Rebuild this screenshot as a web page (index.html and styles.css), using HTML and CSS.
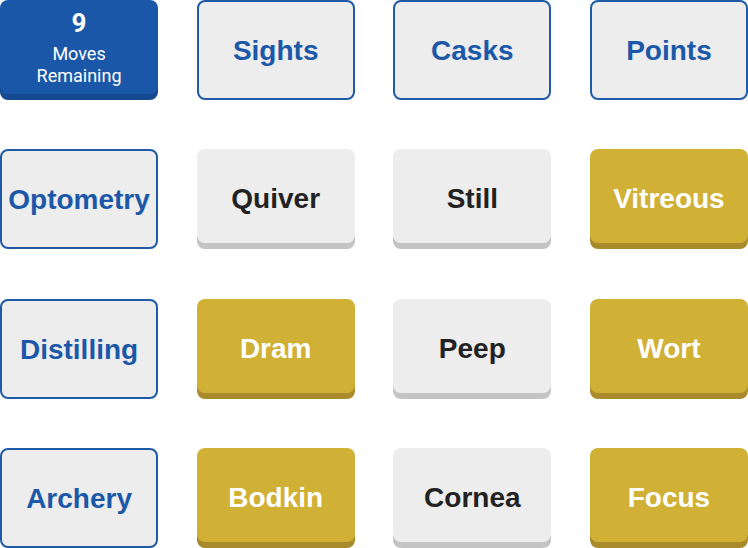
FILE: index.html
```html
<!DOCTYPE html>
<html lang="en">
<head>
  <meta charset="UTF-8">
  <meta name="viewport" content="width=device-width, initial-scale=1">
  <title>Word Board</title>
  <link rel="stylesheet" href="styles.css">
</head>
<body>

<div class="board">
  <!-- Row 1 -->
  <div class="tile counter">
    <span class="count">9</span>
    <span class="label">Moves<br>Remaining</span>
  </div>
  <div class="tile found">Sights</div>
  <div class="tile found">Casks</div>
  <div class="tile found">Points</div>

  <!-- Row 2 -->
  <div class="tile found">Optometry</div>
  <div class="tile plain">Quiver</div>
  <div class="tile plain">Still</div>
  <div class="tile gold">Vitreous</div>

  <!-- Row 3 -->
  <div class="tile found">Distilling</div>
  <div class="tile gold">Dram</div>
  <div class="tile plain">Peep</div>
  <div class="tile gold">Wort</div>

  <!-- Row 4 -->
  <div class="tile found">Archery</div>
  <div class="tile gold">Bodkin</div>
  <div class="tile plain">Cornea</div>
  <div class="tile gold">Focus</div>
</div>

</body>
</html>
```

FILE: styles.css
```css
/* Basic reset */
body {
  margin: 0;
  background: #fff;
  font-family: "Liberation Sans", Arial, sans-serif;
}

.board {
  display: grid;
  grid-template-columns: repeat(4, 1fr);
  grid-template-rows: repeat(4, 100px);
  column-gap: 38.5px;
  row-gap: 49.3px;
  width: 748px;
  height: 548px;
}

.tile {
  box-sizing: border-box;
  display: flex;
  flex-direction: column;
  align-items: center;
  justify-content: center;
  border-radius: 8px;
  font-size: 28px;
  font-weight: bold;
  text-align: center;
}

/* Words already placed: outlined in blue */
.tile.found {
  height: 100px;
  padding-top: 2px;
  background: #ededed;
  border: 2px solid #1f5aa6;
  color: #1c58a8;
}

/* Raised tiles sit 6px above their own ledge */
.tile.plain,
.tile.gold,
.tile.counter {
  height: 94px;
  padding-top: 6px;
}
.tile.plain {
  background: #ededed;
  color: #222;
  box-shadow: 0 6px 0 #c4c4c4;
}
.tile.gold {
  background: #d1b036;
  color: #fff;
  box-shadow: 0 6px 0 #a98b2b;
}

.tile.counter {
  justify-content: flex-start;
  background: #1b57a8;
  color: #fff;
  box-shadow: 0 6px 0 #164a90;
  font-family: Roboto, "Liberation Sans", sans-serif;
  padding-top: 3px;
}
.counter .count {
  font-size: 26px;
  font-weight: bold;
  line-height: 40px;
}
.counter .label {
  font-size: 18px;
  font-weight: normal;
  line-height: 22px;
}
```
